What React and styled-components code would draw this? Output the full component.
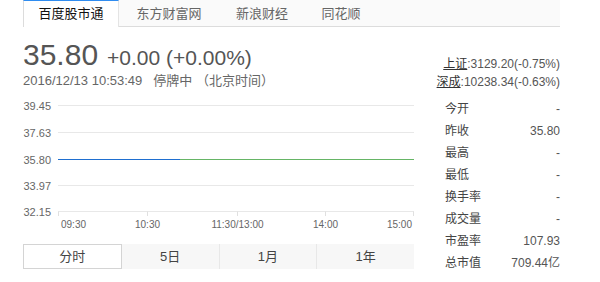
import React from 'react'
import styled, {createGlobalStyle} from 'styled-components'

const GlobalStyle = createGlobalStyle`
  html, body {
    margin: 0;
    padding: 0;
    background: #fff;
  }
  body {
    font-family: "Liberation Sans", "Noto Sans CJK SC", sans-serif;
    color: #555;
  }
`

const Page = styled.div`
  width: 537px;
  margin-left: 23px;
`

const SourceBar = styled.div`
  display: flex;
  height: 26px;
  background: #fafafa;
  border-bottom: 1px solid #dcdcdc;
`

const SourceTab = styled.div`
  position: relative;
  box-sizing: border-box;
  width: ${p => p.$w}px;
  height: ${p => (p.$active ? 27 : 26)}px;
  line-height: 26px;
  text-align: center;
  font-size: 13px;
  color: ${p => (p.$active ? '#111' : '#666')};
  background: ${p => (p.$active ? '#fff' : 'transparent')};
  border-top: 1px solid ${p => (p.$active ? '#2f8cf0' : 'transparent')};
  border-left: ${p => (p.$active ? '1px solid #dcdcdc' : 'none')};
  border-right: ${p => (p.$active ? '1px solid #e4e4e4' : 'none')};

  & + &::before {
    content: '';
    display: ${p => (p.$sep ? 'block' : 'none')};
    position: absolute;
    left: 0;
    top: 5px;
    height: 16px;
    border-left: 1px solid #dedede;
  }
`

const Main = styled.div`
  display: flex;
`

const LeftCol = styled.div`
  width: 391px;
`

const RightCol = styled.div`
  flex: 1;
  display: flex;
  flex-direction: column;
  align-items: flex-end;
  padding-top: 28px;
`

const PriceRow = styled.div`
  margin-top: 11px;
  height: 34px;
  display: flex;
  align-items: baseline;
  color: #555;
`

const Price = styled.span`
  font-size: 30px;
  line-height: 34px;
`

const Change = styled.span`
  font-size: 21px;
  margin-left: 9px;
`

const TimeLine = styled.div`
  font-size: 13px;
  line-height: 18px;
  color: #666;
`

const Halt = styled.span`
  margin-left: 11px;
`

const ChartSvg = styled.svg`
  display: block;
  font-family: "Liberation Sans", sans-serif;
`

const PeriodTabs = styled.div`
  display: flex;
  height: 25px;
  background: #f7f7f7;
`

const PeriodTab = styled.div`
  flex: 1;
  box-sizing: border-box;
  line-height: ${p => (p.$active ? 23 : 25)}px;
  text-align: center;
  font-size: 13px;
  color: #444;
  background: ${p => (p.$active ? '#fff' : 'transparent')};
  border: ${p => (p.$active ? '1px solid #d4d4d4' : 'none')};
  border-left: ${p => (!p.$active && !p.$first ? '1px solid #e8e8e8' : undefined)};
`

const IndexLine = styled.div`
  font-size: 12px;
  line-height: 18px;
  color: #555;
  white-space: nowrap;
`

const IndexName = styled.span`
  color: #333;
  text-decoration: underline;
`

const Stats = styled.div`
  width: 115px;
  margin-top: 7px;
`

const StatRow = styled.div`
  display: flex;
  justify-content: space-between;
  height: 22px;
  line-height: 22px;
  font-size: 12px;
`

const StatLabel = styled.span`
  color: #444;
`

const StatValue = styled.span`
  color: #555;
`

const sources = [
  {name: '百度股市通', w: 96, active: true},
  {name: '东方财富网', w: 100},
  {name: '新浪财经', w: 86, sep: true},
  {name: '同花顺', w: 72, sep: true}
]

const levels = [
  {v: '39.45', y: 15.5},
  {v: '37.63', y: 42.5},
  {v: '35.80', y: 69.5},
  {v: '33.97', y: 95.5},
  {v: '32.15', y: 121.5}
]

const times = [
  {t: '09:30', x: 38, a: 'start'},
  {t: '10:30', x: 124.5, a: 'middle'},
  {t: '11:30/13:00', x: 214.5, a: 'middle'},
  {t: '14:00', x: 302.5, a: 'middle'},
  {t: '15:00', x: 389, a: 'end'}
]

const ticks = [35.5, 124.5, 214.5, 302.5, 390.5]

const stats = [
  ['今开', '-'],
  ['昨收', '35.80'],
  ['最高', '-'],
  ['最低', '-'],
  ['换手率', '-'],
  ['成交量', '-'],
  ['市盈率', '107.93'],
  ['总市值', '709.44亿']
]

const Chart = () => (
  <ChartSvg width="391" height="154" viewBox="0 0 391 154">
    {levels.map(l => (
      <g key={l.v}>
        <text x="28" y={l.y + 4} fontSize="11" fill="#666" textAnchor="end">
          {l.v}
        </text>
        <line x1="35" x2="391" y1={l.y} y2={l.y} stroke={l.v === '35.80' ? 'none' : '#e8e8e8'} />
      </g>
    ))}
    <line x1="35" x2="157" y1="69.5" y2="69.5" stroke="#1f6fd0" />
    <line x1="157" x2="391" y1="69.5" y2="69.5" stroke="#66b566" />
    {ticks.map(x => (
      <line key={x} x1={x} x2={x} y1="121.5" y2="126" stroke="#e0e0e0" />
    ))}
    {times.map(t => (
      <text key={t.t} x={t.x} y="138" fontSize="10" fill="#666" textAnchor={t.a}>
        {t.t}
      </text>
    ))}
  </ChartSvg>
)

const App = () => (
  <>
    <GlobalStyle />
    <Page>
      <SourceBar>
        {sources.map(s => (
          <SourceTab key={s.name} $w={s.w} $active={s.active} $sep={s.sep}>
            {s.name}
          </SourceTab>
        ))}
      </SourceBar>

      <Main>
        <LeftCol>
          <PriceRow>
            <Price>35.80</Price>
            <Change>+0.00 (+0.00%)</Change>
          </PriceRow>
          <TimeLine>
            2016/12/13 10:53:49<Halt>停牌中 （北京时间）</Halt>
          </TimeLine>
          <Chart />
          <PeriodTabs>
            <PeriodTab $active>分时</PeriodTab>
            <PeriodTab $first>5日</PeriodTab>
            <PeriodTab>1月</PeriodTab>
            <PeriodTab>1年</PeriodTab>
          </PeriodTabs>
        </LeftCol>

        <RightCol>
          <IndexLine>
            <IndexName>上证</IndexName>:3129.20(-0.75%)
          </IndexLine>
          <IndexLine>
            <IndexName>深成</IndexName>:10238.34(-0.63%)
          </IndexLine>
          <Stats>
            {stats.map(([k, v]) => (
              <StatRow key={k}>
                <StatLabel>{k}</StatLabel>
                <StatValue>{v}</StatValue>
              </StatRow>
            ))}
          </Stats>
        </RightCol>
      </Main>
    </Page>
  </>
)

export default App
